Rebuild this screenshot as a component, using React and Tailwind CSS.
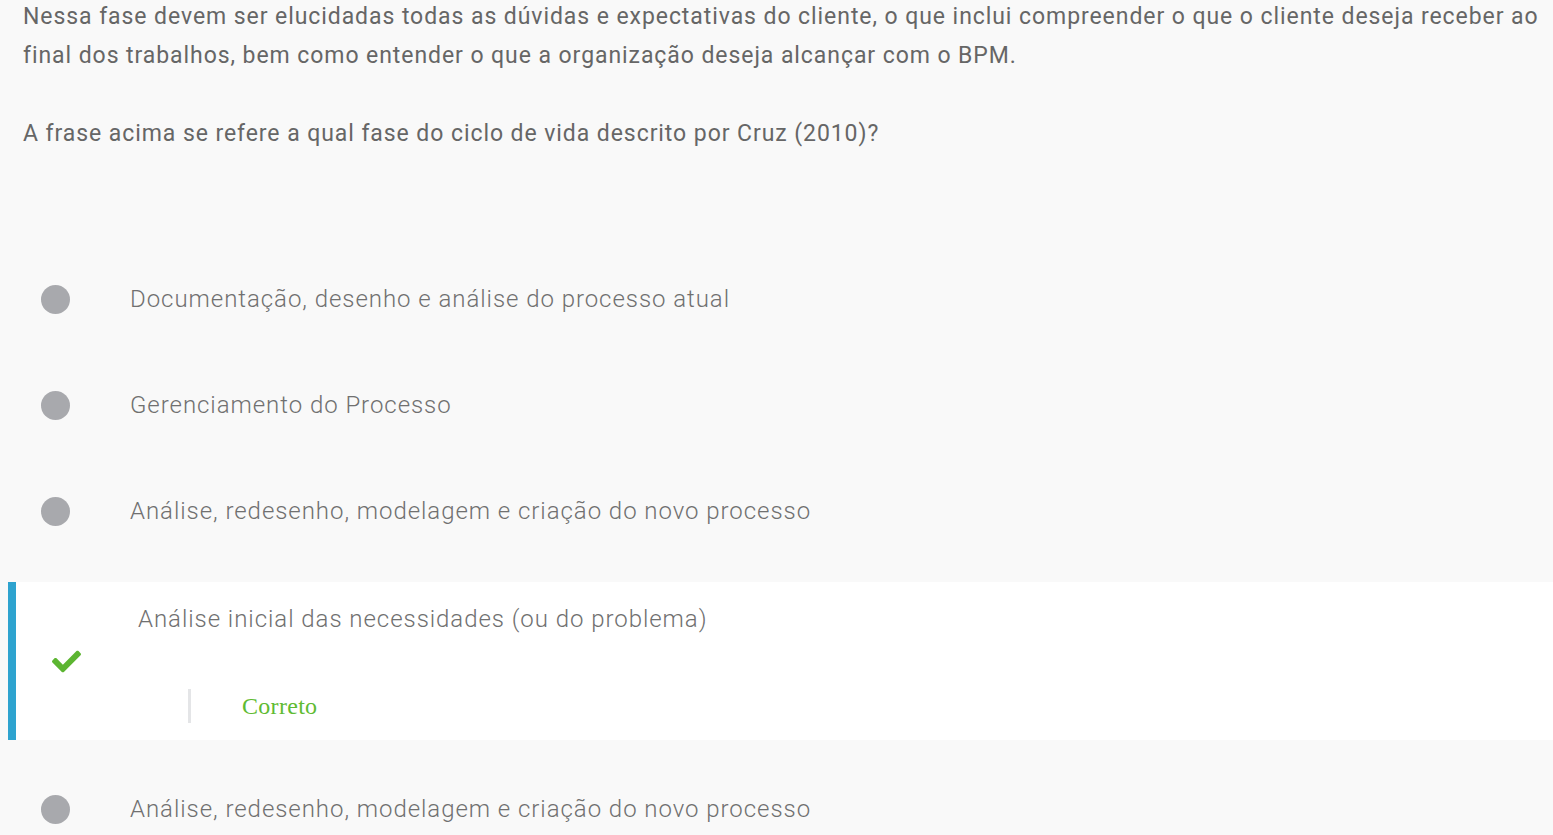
import { FaCheck } from "react-icons/fa";

const options = [
  "Documentação, desenho e análise do processo atual",
  "Gerenciamento do Processo",
  "Análise, redesenho, modelagem e criação do novo processo",
];

function Dot() {
  return <span className="block w-[29px] h-[29px] rounded-full bg-[#a8a9ad]" />;
}

function Option({ text }) {
  return (
    <div className="flex items-center h-[106px]">
      <div className="w-[130px] pl-[41px] flex items-center">
        <Dot />
      </div>
      <span className="text-[24px] font-light tracking-[0.95px] text-[#707070]">{text}</span>
    </div>
  );
}

export default function App() {
  return (
    <div
      className="min-h-screen bg-[#f9f9f9] overflow-hidden"
      style={{ fontFamily: "Roboto, 'Liberation Sans', sans-serif" }}
    >
      <div className="pl-[23px] pr-[8px] -mt-[3px] text-[23px] leading-[39px] tracking-[0.93px] text-[#666666]">
        <p>
          Nessa fase devem ser elucidadas todas as dúvidas e expectativas do cliente, o que inclui compreender o que o cliente deseja receber ao final dos trabalhos, bem como entender o que a organização deseja alcançar com o BPM.
        </p>
        <p className="mt-[39px]">A frase acima se refere a qual fase do ciclo de vida descrito por Cruz (2010)?</p>
      </div>

      <div className="mt-[93px]">
        {options.map((o, i) => (
          <Option key={i} text={o} />
        ))}

        <div className="ml-[8px] mt-[18px] mb-[16px] flex bg-white border-l-[8px] border-[#2ea3cf]">
          <div className="w-[122px] flex items-center pl-[36px]">
            <FaCheck className="w-[29px] h-[29px] text-[#5cb531]" />
          </div>
          <div className="pt-[19px] pb-[17px]">
            <div className="text-[24px] leading-[36px] font-light tracking-[0.95px] text-[#707070]">
              Análise inicial das necessidades (ou do problema)
            </div>
            <div className="mt-[52px] ml-[50px] flex items-center h-[34px] border-l-[3px] border-[#e4e5e7] pl-[51px]">
              <span
                className="text-[24px] tracking-[0.3px] text-[#5fbb32]"
                style={{ fontFamily: "'Liberation Serif', serif" }}
              >
                Correto
              </span>
            </div>
          </div>
        </div>

        <Option text="Análise, redesenho, modelagem e criação do novo processo" />
      </div>
    </div>
  );
}
